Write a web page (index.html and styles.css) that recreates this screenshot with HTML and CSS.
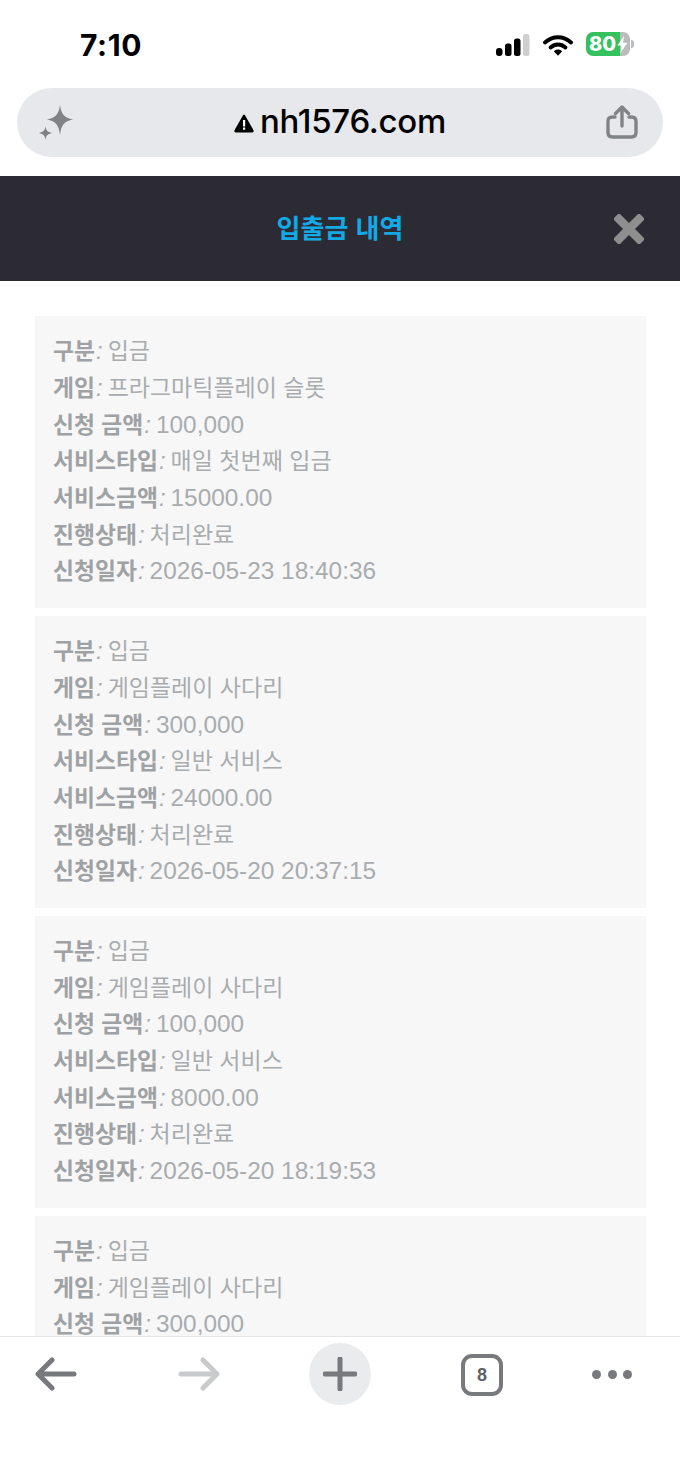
FILE: index.html
```html
<!DOCTYPE html>
<html lang="ko">
<head>
<meta charset="utf-8">
<title>입출금 내역</title>
<link rel="stylesheet" href="styles.css">
</head>
<body>
<div class="phone">
  <div class="status">
    <span class="time">7:10</span>
    <div class="status-icons">
      <svg class="signal" width="34" height="22" viewBox="0 0 34 22"><rect x="0" y="14" width="6.5" height="8" rx="3" fill="#000"/><rect x="9" y="9.500" width="6.500" height="12.500" rx="2.500" fill="#000"/><rect x="18" y="4.500" width="6.500" height="17.500" rx="2.500" fill="#000"/><rect x="27" y="0" width="6.500" height="22" rx="2.500" fill="#cfcfcf"/></svg>
      <svg class="wifi" width="30" height="22" viewBox="0 0 30 22"><path d="M2 8.500C9.500 1.500 20.500 1.500 28 8.500" fill="none" stroke="#000" stroke-width="3.800" stroke-linecap="round"/><path d="M7.500 13.500C12 9.500 18 9.500 22.500 13.500" fill="none" stroke="#000" stroke-width="3.800" stroke-linecap="round"/><path d="M10.800 17.200C13.300 15 16.700 15 19.200 17.200L15 21.800Z" fill="#000"/></svg>
      <div class="battery">
        <div class="battery-body"><span class="battery-level">80</span><svg class="bolt" width="11" height="17" viewBox="0 0 11 17"><path d="M7 0L0.500 9.500H4.500L3.500 17L10.500 6.800H6.200Z" fill="#fff"/></svg></div>
        <span class="battery-nub"></span>
      </div>
    </div>
  </div>

  <div class="url-wrap">
    <div class="url-bar">
      <svg class="spark" width="38" height="38" viewBox="0 0 38 38"><path d="M23 1C24.200 10 27 13.800 36 15.500C27 17.200 24.200 21 23 31C21.800 21 19 17.200 10 15.500C19 13.800 21.800 10 23 1Z" fill="#7f8286"/><path d="M8.500 22C9 26.500 10.500 28 15 29C10.500 30 9 31.500 8.500 36C8 31.500 6.500 30 2 29C6.500 28 8 26.500 8.500 22Z" fill="#7f8286"/></svg>
      <div class="url">
        <svg class="warn" width="20" height="19" viewBox="0 0 20 19"><path d="M10 1.500L18.500 16.500Q19 17.500 18 17.500H2Q1 17.500 1.500 16.500Z" fill="#000" stroke="#000" stroke-width="2" stroke-linejoin="round"/><rect x="9" y="6" width="2.200" height="6.500" fill="#fff"/><rect x="9" y="13.500" width="2.200" height="2.200" fill="#fff"/></svg>
        <span class="domain">nh1576.com</span>
      </div>
      <svg class="share" width="32" height="34" viewBox="0 0 32 34"><path d="M9 12H6.500Q2 12 2 16.500V27.500Q2 32 6.500 32H25.500Q30 32 30 27.500V16.500Q30 12 25.500 12H23" fill="none" stroke="#808387" stroke-width="3.400" stroke-linecap="round"/><path d="M16 21V3M9.500 8.500L16 2L22.500 8.500" fill="none" stroke="#808387" stroke-width="3.400" stroke-linecap="round" stroke-linejoin="round"/></svg>
    </div>
  </div>

  <header class="head">
    <h1 class="title">입출금 내역</h1>
    <svg class="close" width="30" height="30" viewBox="0 0 30 30"><path d="M5 5L25 25M25 5L5 25" stroke="#8e8e8e" stroke-width="8.500" stroke-linecap="square"/></svg>
  </header>

  <main class="list">
    <section class="card">
      <p class="row"><b class="key">구분</b><span class="sep">:</span><span class="ko">입금</span></p>
      <p class="row"><b class="key">게임</b><span class="sep">:</span><span class="ko">프라그마틱플레이 슬롯</span></p>
      <p class="row"><b class="key">신청 금액</b><span class="sep">:</span><span class="num">100,000</span></p>
      <p class="row"><b class="key">서비스타입</b><span class="sep">:</span><span class="ko">매일 첫번째 입금</span></p>
      <p class="row"><b class="key">서비스금액</b><span class="sep">:</span><span class="num">15000.00</span></p>
      <p class="row"><b class="key">진행상태</b><span class="sep">:</span><span class="ko">처리완료</span></p>
      <p class="row"><b class="key">신청일자</b><span class="sep">:</span><span class="num">2026-05-23 18:40:36</span></p>
    </section>
    <section class="card">
      <p class="row"><b class="key">구분</b><span class="sep">:</span><span class="ko">입금</span></p>
      <p class="row"><b class="key">게임</b><span class="sep">:</span><span class="ko">게임플레이 사다리</span></p>
      <p class="row"><b class="key">신청 금액</b><span class="sep">:</span><span class="num">300,000</span></p>
      <p class="row"><b class="key">서비스타입</b><span class="sep">:</span><span class="ko">일반 서비스</span></p>
      <p class="row"><b class="key">서비스금액</b><span class="sep">:</span><span class="num">24000.00</span></p>
      <p class="row"><b class="key">진행상태</b><span class="sep">:</span><span class="ko">처리완료</span></p>
      <p class="row"><b class="key">신청일자</b><span class="sep">:</span><span class="num">2026-05-20 20:37:15</span></p>
    </section>
    <section class="card">
      <p class="row"><b class="key">구분</b><span class="sep">:</span><span class="ko">입금</span></p>
      <p class="row"><b class="key">게임</b><span class="sep">:</span><span class="ko">게임플레이 사다리</span></p>
      <p class="row"><b class="key">신청 금액</b><span class="sep">:</span><span class="num">100,000</span></p>
      <p class="row"><b class="key">서비스타입</b><span class="sep">:</span><span class="ko">일반 서비스</span></p>
      <p class="row"><b class="key">서비스금액</b><span class="sep">:</span><span class="num">8000.00</span></p>
      <p class="row"><b class="key">진행상태</b><span class="sep">:</span><span class="ko">처리완료</span></p>
      <p class="row"><b class="key">신청일자</b><span class="sep">:</span><span class="num">2026-05-20 18:19:53</span></p>
    </section>
    <section class="card">
      <p class="row"><b class="key">구분</b><span class="sep">:</span><span class="ko">입금</span></p>
      <p class="row"><b class="key">게임</b><span class="sep">:</span><span class="ko">게임플레이 사다리</span></p>
      <p class="row"><b class="key">신청 금액</b><span class="sep">:</span><span class="num">300,000</span></p>
    </section>
  </main>

  <nav class="toolbar">
    <svg class="tool" width="42" height="34" viewBox="0 0 42 34"><path d="M39 17H4M17 3L3 17L17 31" fill="none" stroke="#77797c" stroke-width="5" stroke-linecap="round" stroke-linejoin="round"/></svg>
    <svg class="tool" width="42" height="34" viewBox="0 0 42 34"><path d="M3 17H38M25 3L39 17L25 31" fill="none" stroke="#c9cacb" stroke-width="5" stroke-linecap="round" stroke-linejoin="round"/></svg>
    <div class="plus">
      <svg width="34" height="34" viewBox="0 0 34 34"><path d="M17 2V32M2 17H32" stroke="#77797c" stroke-width="5" stroke-linecap="round"/></svg>
    </div>
    <div class="tabs">8</div>
    <div class="more"><span class="dot"></span><span class="dot"></span><span class="dot"></span></div>
  </nav>
</div>
</body>
</html>
```
FILE: styles.css
```css
* { box-sizing: border-box; }
html, body { margin: 0; padding: 0; background: #fff; }
.phone {
  width: 680px;
  height: 1472px;
  display: flex;
  flex-direction: column;
  overflow: hidden;
  font-family: "Liberation Sans", "Noto Sans CJK KR", sans-serif;
}
.status {
  height: 88px;
  flex: none;
  display: flex;
  justify-content: space-between;
  align-items: flex-start;
  padding: 27px 46px 0 80px;
}
.time {
  font-family: "Inter", "Liberation Sans", sans-serif;
  font-weight: 700;
  font-size: 30px;
  line-height: 36px;
  color: #000;
  letter-spacing: 0.6px;
}
.status-icons { display: flex; align-items: center; gap: 13px; margin-top: 6px; }
.battery { display: flex; align-items: center; gap: 1px; margin-top: -1px; }
.battery-body {
  width: 44px;
  height: 24px;
  border-radius: 7px;
  display: flex;
  align-items: center;
  padding-left: 3px;
  background: linear-gradient(90deg, #35c25e 0 78%, #b9bbbc 78% 100%);
}
.battery-level {
  font-family: "Inter", "Liberation Sans", sans-serif;
  font-weight: 800;
  font-size: 20px;
  line-height: 24px;
  color: #fff;
}
.bolt { margin-left: 1px; }
.battery-nub { width: 3px; height: 8px; border-radius: 0 3px 3px 0; background: #b9bbbc; }

.url-wrap { padding: 0 17px; flex: none; height: 88px; }
.url-bar {
  height: 69px;
  background: #e6e8eb;
  border-radius: 35px;
  display: flex;
  align-items: center;
  justify-content: space-between;
  padding: 0 25px 0 20px;
}
.url { display: flex; align-items: center; gap: 6px; margin-right: 1px; }
.warn { margin-top: 2px; }
.domain {
  font-family: "Inter", "Liberation Sans", sans-serif;
  font-weight: 500;
  font-size: 33px;
  line-height: 40px;
  letter-spacing: -0.3px;
  color: #000;
  margin-top: -3px;
}
.share { margin-top: -2px; }

.head {
  height: 105px;
  flex: none;
  margin-top: 0;
  background: #2c2b33;
  position: relative;
  display: flex;
  align-items: center;
  justify-content: center;
}
.title {
  margin: 0 0 3px;
  font-family: "Noto Sans CJK KR", sans-serif;
  font-weight: 700;
  font-size: 26px;
  line-height: 36px;
  color: #12a9e6;
}
.close { position: absolute; right: 36px; top: 38px; }

.list {
  flex: 1;
  min-height: 0;
  padding: 35px 34px 0 35px;
  display: flex;
  flex-direction: column;
  gap: 8px;
}
.card {
  flex: none;
  background: #f7f7f8;
  padding: 15.4px 18px 19.9px;
}
.row {
  margin: 0;
  height: 36.67px;
  line-height: 36.67px;
  white-space: nowrap;
  color: #a9acae;
  font-family: "Noto Sans CJK KR", sans-serif;
  font-size: 23px;
}
.key {
  font-weight: 700;
  font-size: 22.8px;
  color: #9fa2a4;
}
.sep { font-family: "Liberation Sans", sans-serif; font-size: 24px; font-style: italic; margin: 0 5px 0 1px; }
.num { font-family: "Liberation Sans", sans-serif; font-size: 24.4px; }

.toolbar {
  height: 136px;
  flex: none;
  background: #fff;
  border-top: 1px solid #e4e5e6;
  position: relative;
  display: flex;
  align-items: flex-start;
  padding: 6px 0 0 35px;
}
.tool { margin-top: 14px; flex: none; }
.tool + .tool { margin-left: 101px; }
.plus {
  width: 62px;
  height: 62px;
  margin-left: 89px;
  border-radius: 50%;
  background: #e9ebed;
  display: flex;
  align-items: center;
  justify-content: center;
  flex: none;
}
.tabs {
  width: 42px;
  height: 42px;
  margin: 11px 0 0 90px;
  border: 4px solid #77797c;
  border-radius: 11px;
  display: flex;
  align-items: center;
  justify-content: center;
  font-weight: 700;
  font-size: 18px;
  color: #5f6266;
  flex: none;
}
.more { display: flex; gap: 6.500px; margin: 27px 0 0 89px; }
.dot { width: 9px; height: 9px; border-radius: 50%; background: #77797c; }
```
